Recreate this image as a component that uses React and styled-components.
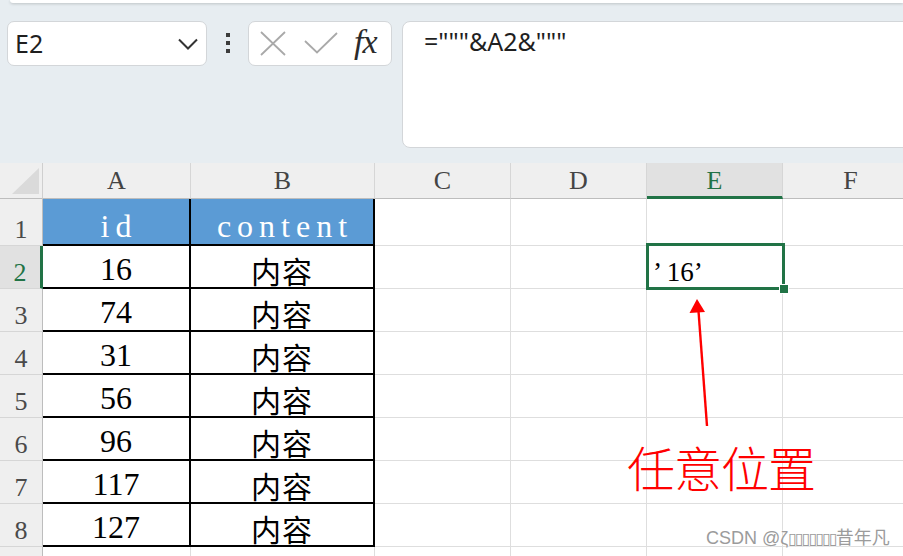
import React from "react";
import styled, { createGlobalStyle } from "styled-components";

const Global = createGlobalStyle`
  html, body {
    margin: 0;
    padding: 0;
    overflow: hidden;
    background: #fff;
  }
`;

const Page = styled.div`
  width: 903px;
  height: 556px;
  overflow: hidden;
  position: relative;
`;

const Top = styled.div`
  height: 163px;
  background: #e7edf1;
  overflow: hidden;
`;

const RibbonEdge = styled.div`
  height: 3px;
  margin-left: 10px;
  background: #fff;
  border-bottom-left-radius: 8px;
  box-shadow: 0 1px 3px rgba(0, 0, 0, 0.18);
`;

const BarRow = styled.div`
  display: flex;
  align-items: flex-start;
  margin-top: 18px;
  padding-left: 7px;
`;

const NameBox = styled.div`
  box-sizing: border-box;
  width: 200px;
  height: 45px;
  display: flex;
  align-items: center;
  justify-content: space-between;
  padding: 0 8px 0 7px;
  background: #fff;
  border: 1px solid #d3d6d9;
  border-radius: 7px;
  font: 25px/1 "Noto Sans", "Open Sans", sans-serif;
  color: #1f1f1f;
`;

const Dots = styled.div`
  display: flex;
  flex-direction: column;
  gap: 4px;
  margin: 12px 18px 0 19px;
  span {
    width: 4px;
    height: 4px;
    background: #3c3c3c;
  }
`;

const FxBox = styled.div`
  box-sizing: border-box;
  width: 144px;
  height: 45px;
  display: flex;
  align-items: center;
  padding-left: 11px;
  background: #fff;
  border: 1px solid #d3d6d9;
  border-radius: 7px;
`;

const FxLabel = styled.span`
  margin-left: 16px;
  font: italic 34px/1 "Liberation Serif", serif;
  color: #2b2b2b;
  letter-spacing: -1px;
  padding-bottom: 4px;
`;

const FormulaInput = styled.div`
  box-sizing: border-box;
  flex: 1;
  height: 127px;
  margin-left: 10px;
  margin-right: -20px;
  padding: 4px 0 0 21px;
  background: #fff;
  border: 1px solid #d3d6d9;
  border-radius: 8px;
  font: 25px/1.2 "Noto Sans", "Open Sans", sans-serif;
  color: #1f1f1f;
`;

const Sheet = styled.div`
  position: relative;
  display: grid;
  grid-template-columns: 43px 148px 184px 136px 136px 136px 136px;
  grid-template-rows: 36px 47px repeat(8, 43px);
  width: 919px;
`;

const Corner = styled.div`
  position: relative;
  box-sizing: border-box;
  background: #efefef;
  border-right: 1px solid #cfcfcf;
  border-bottom: 1px solid #bdbdbd;
  &::after {
    content: "";
    position: absolute;
    right: 3px;
    bottom: 4px;
    border-style: solid;
    border-width: 0 0 26px 27px;
    border-color: transparent transparent #dadada transparent;
  }
`;

const ColHead = styled.div`
  box-sizing: border-box;
  display: flex;
  align-items: flex-end;
  justify-content: center;
  padding-bottom: ${(p) => (p.$active ? "2px" : "4px")};
  background: ${(p) => (p.$active ? "#e1e1e1" : "#efefef")};
  border-right: 1px solid #d6d6d6;
  border-bottom: ${(p) => (p.$active ? "3px solid #217346" : "1px solid #bdbdbd")};
  font: 26px/1 "Liberation Serif", serif;
  color: ${(p) => (p.$active ? "#217346" : "#444")};
`;

const RowHead = styled.div`
  box-sizing: border-box;
  display: flex;
  align-items: flex-end;
  justify-content: center;
  padding-bottom: 2px;
  background: ${(p) => (p.$active ? "#e1e1e1" : "#efefef")};
  border-right: ${(p) => (p.$active ? "3px solid #217346" : "1px solid #bdbdbd")};
  border-bottom: 1px solid #d6d6d6;
  font: 26px/1 "Liberation Serif", serif;
  color: ${(p) => (p.$active ? "#217346" : "#4a4a4a")};
`;

const Cell = styled.div`
  position: relative;
  box-sizing: border-box;
  display: flex;
  align-items: flex-end;
  justify-content: ${(p) => (p.$left ? "flex-start" : "center")};
  padding: ${(p) => (p.$left ? "0 0 2px 6px" : p.$head ? "0 0 2px 6px" : "0 0 2px")};
  background: ${(p) => (p.$head ? "#5b9bd5" : "#fff")};
  color: ${(p) => (p.$head ? "#fff" : "#000")};
  border-right: ${(p) => (p.$boxed ? "2px solid #000" : "1px solid #dedede")};
  border-bottom: ${(p) => (p.$boxed ? "2px solid #000" : "1px solid #dedede")};
  font: ${(p) => (p.$small ? "27px" : "32px")}/1 "Liberation Serif", "Noto Sans CJK SC", serif;
  letter-spacing: ${(p) => (p.$head ? "6px" : "0")};
  white-space: nowrap;
`;

const Han = styled.span`
  font: 30px/1 "Noto Sans CJK SC", sans-serif;
  letter-spacing: 1px;
`;

const Selection = styled.div`
  position: absolute;
  top: -3px;
  left: -1px;
  right: -3px;
  bottom: -2px;
  border: 3px solid #217346;
  z-index: 2;
  pointer-events: none;
`;

const FillHandle = styled.div`
  position: absolute;
  right: -7px;
  bottom: -7px;
  width: 8px;
  height: 8px;
  background: #217346;
  border: 1px solid #fff;
`;

const Arrow = styled.svg`
  position: absolute;
  left: 680px;
  top: 132px;
  z-index: 3;
`;

const Note = styled.div`
  position: absolute;
  left: 627px;
  top: 279px;
  z-index: 3;
  font: 300 48px/1 "Noto Sans CJK SC", sans-serif;
  color: #ff0000;
  letter-spacing: -1px;
`;

const Watermark = styled.div`
  position: absolute;
  left: 706px;
  bottom: 9px;
  z-index: 4;
  font: 18px/1 "Liberation Sans", "Noto Sans CJK SC", sans-serif;
  color: #9b9b9b;
  text-shadow: 0 0 2px #fff, 0 0 2px #fff;
  white-space: nowrap;
  span {
    font: 16px/1 "DejaVu Sans", sans-serif;
    letter-spacing: -2px;
  }
`;

const COLS = ["A", "B", "C", "D", "E", "F"];
const IDS = ["16", "74", "31", "56", "96", "117", "127"];

const Chevron = () => (
  <svg width="20" height="12" viewBox="0 0 20 12">
    <path d="M1 1.5 L10 10.5 L19 1.5" fill="none" stroke="#333" strokeWidth="2" />
  </svg>
);

const CancelIcon = () => (
  <svg width="26" height="25" viewBox="0 0 26 25">
    <path d="M1 1 L25 24 M25 1 L1 24" stroke="#a9a9a9" strokeWidth="1.8" fill="none" />
  </svg>
);

const EnterIcon = () => (
  <svg width="34" height="23" viewBox="0 0 34 23" style={{ marginLeft: 18 }}>
    <path d="M1 9 L13 20.5 L33 1" stroke="#a9a9a9" strokeWidth="1.8" fill="none" />
  </svg>
);

const EmptyCells = ({ row }) =>
  ["C", "D", "E", "F"].map((c) => <Cell key={c + row} />);

export default function App() {
  return (
    <Page>
      <Global />
      <Top>
        <RibbonEdge />
        <BarRow>
          <NameBox>
            E2
            <Chevron />
          </NameBox>
          <Dots>
            <span />
            <span />
            <span />
          </Dots>
          <FxBox>
            <CancelIcon />
            <EnterIcon />
            <FxLabel>fx</FxLabel>
          </FxBox>
          <FormulaInput>="""&amp;A2&amp;"""</FormulaInput>
        </BarRow>
      </Top>

      <Sheet>
        <Corner />
        {COLS.map((c) => (
          <ColHead key={c} $active={c === "E"}>
            {c}
          </ColHead>
        ))}

        <RowHead>1</RowHead>
        <Cell $head $boxed>id</Cell>
        <Cell $head $boxed>content</Cell>
        <EmptyCells row={1} />

        {IDS.map((id, i) => {
          const n = i + 2;
          return (
            <React.Fragment key={id}>
              <RowHead $active={n === 2}>{n}</RowHead>
              <Cell $boxed>{id}</Cell>
              <Cell $boxed>
                <Han>内容</Han>
              </Cell>
              <Cell />
              <Cell />
              {n === 2 ? (
                <Cell $left $small>
                  ’ 16’
                  <Selection>
                    <FillHandle />
                  </Selection>
                </Cell>
              ) : (
                <Cell />
              )}
              <Cell />
            </React.Fragment>
          );
        })}

        <RowHead />
        <Cell />
        <Cell />
        <EmptyCells row={9} />

        <Arrow width="40" height="136" viewBox="0 0 40 136">
          <path d="M17 4 L9.5 18 L25 17 Z" fill="#ff0000" />
          <path d="M18.5 16 L27 131" stroke="#ff0000" strokeWidth="2.4" />
        </Arrow>
        <Note>任意位置</Note>
      </Sheet>

      <Watermark>
        CSDN @ζ<span>▯▯▯▯▯▯▯</span>昔年凡
      </Watermark>
    </Page>
  );
}
